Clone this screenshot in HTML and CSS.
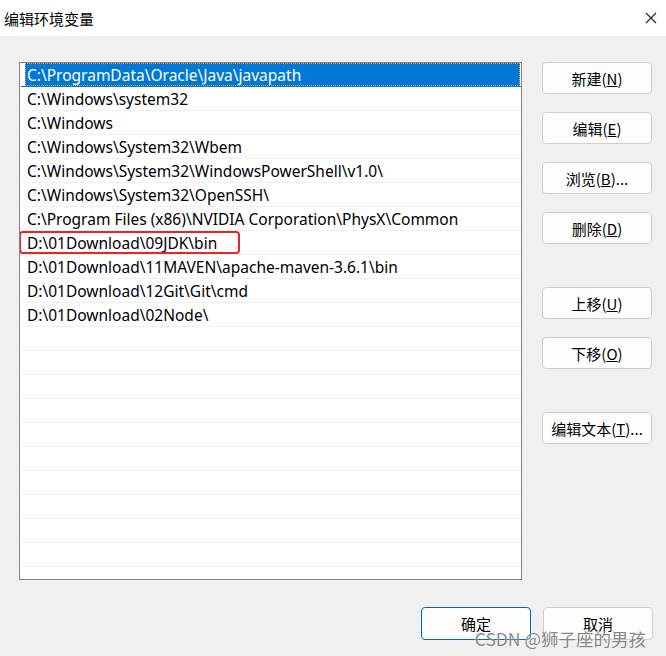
FILE: index.html
```html
<!DOCTYPE html>
<html lang="zh-CN">
<head>
    <meta charset="UTF-8">
    <title>编辑环境变量</title>
    <link rel="stylesheet" href="styles.css">
</head>
<body>
    <div class="dialog">
        <div class="titlebar">
            <span class="title">编辑环境变量</span>
            <span class="close">
                <svg width="12" height="12" viewBox="0 0 12 12"><path d="M1 1L11 11M11 1L1 11" stroke="#222" stroke-width="1.1" fill="none"/></svg>
            </span>
        </div>

        <div class="content">
            <!-- 路径列表 -->
            <div class="list">
                <div class="row selected"><span class="cell">C:\ProgramData\Oracle\Java\javapath</span></div>
                <div class="row"><span class="cell">C:\Windows\system32</span></div>
                <div class="row"><span class="cell">C:\Windows</span></div>
                <div class="row"><span class="cell">C:\Windows\System32\Wbem</span></div>
                <div class="row"><span class="cell">C:\Windows\System32\WindowsPowerShell\v1.0\</span></div>
                <div class="row"><span class="cell">C:\Windows\System32\OpenSSH\</span></div>
                <div class="row"><span class="cell">C:\Program Files (x86)\NVIDIA Corporation\PhysX\Common</span></div>
                <div class="row marked"><span class="cell">D:\01Download\09JDK\bin</span><span class="mark"></span></div>
                <div class="row"><span class="cell">D:\01Download\11MAVEN\apache-maven-3.6.1\bin</span></div>
                <div class="row"><span class="cell">D:\01Download\12Git\Git\cmd</span></div>
                <div class="row"><span class="cell">D:\01Download\02Node\</span></div>
                <div class="row"></div>
                <div class="row"></div>
                <div class="row"></div>
                <div class="row"></div>
                <div class="row"></div>
                <div class="row"></div>
                <div class="row"></div>
                <div class="row"></div>
                <div class="row"></div>
                <div class="row"></div>
                <div class="row"></div>
            </div>

            <!-- 右侧按钮 -->
            <div class="actions">
                <button class="btn">新建(<u>N</u>)</button>
                <button class="btn">编辑(<u>E</u>)</button>
                <button class="btn">浏览(<u>B</u>)...</button>
                <button class="btn">删除(<u>D</u>)</button>
                <button class="btn gap-top">上移(<u>U</u>)</button>
                <button class="btn">下移(<u>O</u>)</button>
                <button class="btn gap-top">编辑文本(<u>T</u>)...</button>
            </div>
        </div>

        <div class="footer">
            <button class="btn primary">确定</button>
            <button class="btn">取消</button>
            <span class="watermark">CSDN @狮子座的男孩</span>
        </div>
    </div>
</body>
</html>
```

FILE: styles.css
```css
/* 整体 */
body {
    margin: 0;
    background-color: #f0f0f0;
    font-family: "Noto Sans", "Noto Sans CJK SC", sans-serif;
    color: #000;
}

.dialog {
    width: 666px;
    height: 656px;
    position: relative;
    overflow: hidden;
}

/* 标题栏 */
.titlebar {
    height: 36px;
    background-color: #fff;
    display: flex;
    align-items: center;
    justify-content: space-between;
    padding: 0 9px 0 4px;
}

.title {
    font-family: "Noto Sans CJK SC", sans-serif;
    font-size: 15px;
    color: #000;
}

.close {
    display: flex;
    align-items: center;
}

/* 主体 */
.content {
    display: flex;
    padding: 26px 0 0 19px;
}

.list {
    width: 501px;
    height: 516px;
    border: 1px solid #838383;
    background-color: #fff;
    overflow: hidden;
}

.row {
    position: relative;
    height: 23px;
    margin-left: 1px;
    border-bottom: 1px solid #f0f0f0;
    display: flex;
    font-size: 15.5px;
}

.cell {
    display: flex;
    align-items: center;
    padding: 1px 0 0 2px;
    margin-left: 4px;
    white-space: nowrap;
}

.row.selected {
    border-bottom-color: #0078d7;
}

.row.selected .cell {
    flex: 1;
    margin-right: 1px;
    background-color: #0078d7;
    color: #fff;
    outline: 1px dotted #e8a040;
    outline-offset: -1px;
}

/* 红框标注 */
.mark {
    position: absolute;
    left: -2px;
    top: 0;
    width: 217px;
    height: 19px;
    border: 2px solid #e62626;
    border-radius: 4px;
}

/* 按钮 */
.actions {
    display: flex;
    flex-direction: column;
    gap: 18px;
    margin-left: 20px;
}

.btn {
    width: 110px;
    height: 32px;
    padding: 0;
    background-color: #fdfdfd;
    border: 1px solid #d0d0d0;
    border-radius: 4px;
    font-family: "Noto Sans CJK SC", sans-serif;
    font-size: 15px;
    color: #000;
}

.btn.gap-top {
    margin-top: 25px;
}

/* 底部 */
.footer {
    display: flex;
    justify-content: flex-end;
    gap: 12px;
    padding: 27px 13px 0 0;
}

.footer .btn {
    height: 33px;
}

.btn.primary {
    border-color: #0067c0;
}

.watermark {
    position: absolute;
    right: 20px;
    bottom: 6px;
    font-family: "Noto Sans CJK SC", sans-serif;
    font-size: 17.5px;
    line-height: 22px;
    color: rgba(80, 80, 80, 0.7);
    text-shadow: 0 0 1px #fff;
}
```
